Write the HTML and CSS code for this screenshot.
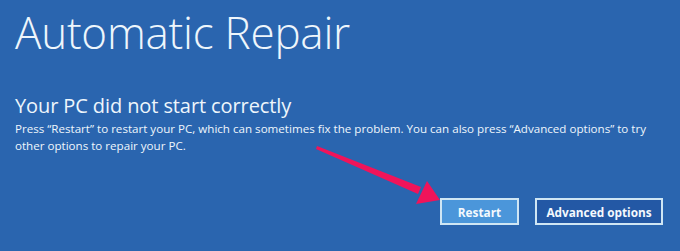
FILE: index.html
```html
<!DOCTYPE html>
<html>
<head>
<meta charset="utf-8">
<link rel="stylesheet" href="styles.css">
</head>
<body>
<div class="screen">
  <h1 class="title">Automatic Repair</h1>
  <h2 class="subtitle">Your PC did not start correctly</h2>
  <p class="body">Press “Restart” to restart your PC, which can sometimes fix the problem. You can also press “Advanced options” to try other options to repair your PC.</p>
  <div class="actions">
    <button class="btn btn-primary">Restart</button>
    <button class="btn btn-secondary">Advanced options</button>
  </div>
  <svg class="arrow" width="680" height="251" viewBox="0 0 680 251">
    <polygon points="317,146 421,187 418,194 316,149" fill="#f0145a"/>
    <polygon points="427,181 440,200 416,204" fill="#f0145a"/>
  </svg>
</div>
</body>
</html>
```
FILE: styles.css
```css
html, body {
  margin: 0;
  padding: 0;
}
body {
  width: 680px;
  height: 251px;
  background: #2a65af;
  overflow: hidden;
  font-family: "Open Sans", "Noto Sans", sans-serif;
  color: #eef6fc;
}
.screen {
  position: relative;
  width: 680px;
  height: 251px;
  padding: 0 0 0 15px;
  box-sizing: border-box;
}
.title {
  margin: 0;
  padding-top: 4px;
  font-size: 44px;
  font-weight: 300;
  line-height: 56px;
  letter-spacing: -0.25px;
}
.subtitle {
  margin: 34px 0 0 0;
  font-size: 20px;
  font-weight: 400;
  line-height: 24px;
  letter-spacing: -0.1px;
}
.body {
  margin: 2px 0 0 0;
  width: 650px;
  font-size: 11.6px;
  line-height: 17px;
}
.actions {
  display: flex;
  justify-content: flex-end;
  gap: 16px;
  margin-top: 44px;
  padding-right: 17px;
}
.btn {
  height: 27px;
  box-sizing: border-box;
  border: 2px solid #cfe6f4;
  font-family: "Open Sans", sans-serif;
  font-weight: 700;
  font-size: 11.8px;
  color: #f4f9fd;
  padding: 0;
}
.btn-primary {
  width: 79px;
  background: #4b96da;
}
.btn-secondary {
  width: 128px;
  background: #2358a5;
}
.arrow {
  position: absolute;
  left: 0;
  top: 0;
}
```
